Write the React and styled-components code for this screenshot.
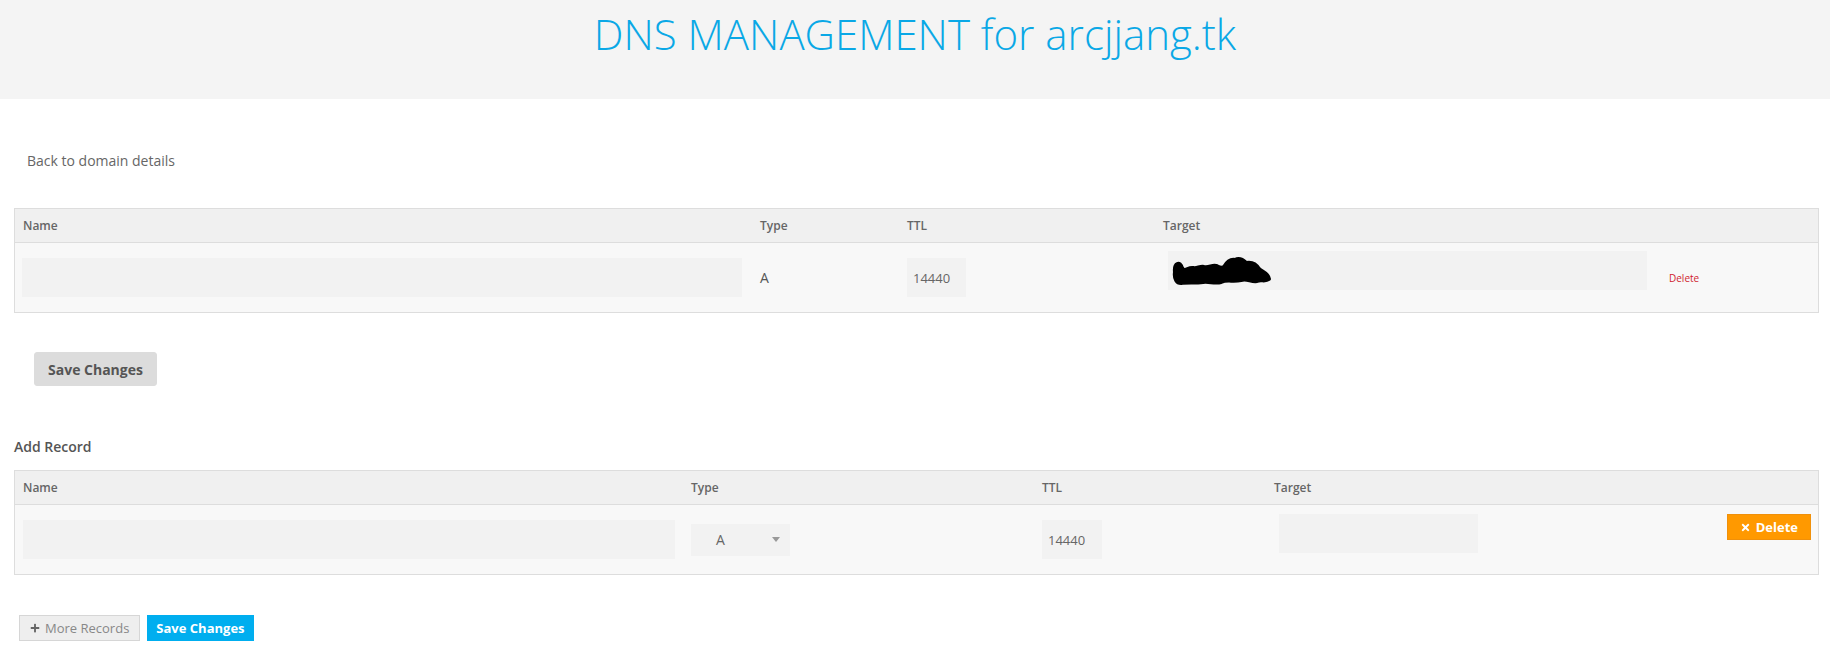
import React from "react";
import styled, { createGlobalStyle } from "styled-components";
import { FaPlus, FaTimes } from "react-icons/fa";

const GlobalStyle = createGlobalStyle`
  body {
    margin: 0;
    background: #ffffff;
    font-family: "Open Sans", "Liberation Sans", sans-serif;
    color: #555;
  }
`;

const Header = styled.header`
  background: #f4f4f4;
  height: 99px;
  padding-top: 5px;
  box-sizing: border-box;
  text-align: center;
`;

const Title = styled.h1`
  margin: 0;
  font-size: 42px;
  line-height: 57px;
  font-weight: 300;
  color: #0aa8e6;
`;

const Content = styled.main`
  padding: 0 11px 10px 14px;
`;

const BackLink = styled.a`
  display: block;
  margin: 52px 0 37px 13px;
  font-size: 14px;
  line-height: 20px;
  color: #666;
  text-decoration: none;
`;

const Table = styled.div`
  border: 1px solid #dddddd;
  background: #f8f8f8;
`;

const Row = styled.div`
  display: grid;
  grid-template-columns: ${(p) => p.$cols};
  align-items: center;
  height: ${(p) => (p.$head ? "33px" : "69px")};
  background: ${(p) => (p.$head ? "#f0f0f0" : "#f8f8f8")};
  border-bottom: ${(p) => (p.$head ? "1px solid #dddddd" : "none")};
`;

const HeadCell = styled.div`
  padding: 0 8px;
  font-size: 12px;
  font-weight: 600;
  color: #666;
`;

const Cell = styled.div`
  padding: 0 8px;
  display: flex;
  align-self: ${(p) => (p.$top ? "start" : "center")};
  margin-top: ${(p) => (p.$top ? "8px" : "0")};
  justify-content: ${(p) => (p.$end ? "flex-end" : "flex-start")};
  padding-right: ${(p) => (p.$end ? "7px" : "8px")};
`;

const Field = styled.div`
  display: flex;
  align-items: center;
  box-sizing: border-box;
  width: ${(p) => p.$w}px;
  height: 39px;
  margin-left: ${(p) => p.$ml || 0}px;
  padding: 0 6px;
  background: #f2f2f2;
  font-size: 13px;
  color: #666;
`;

const TypeText = styled.span`
  font-size: 14px;
  font-weight: 500;
  color: #555;
`;

const Select = styled.div`
  display: flex;
  align-items: center;
  justify-content: space-between;
  box-sizing: border-box;
  width: 99px;
  height: 32px;
  padding: 0 10px 0 25px;
  background: #f2f2f2;
  font-size: 14px;
  color: #666;
`;

const Caret = styled.span`
  width: 0;
  height: 0;
  border-left: 4px solid transparent;
  border-right: 4px solid transparent;
  border-top: 5px solid #999;
`;

const DeleteLink = styled.a`
  font-size: 10px;
  color: #d01c2f;
  text-decoration: none;
`;

const Button = styled.button`
  display: inline-flex;
  align-items: center;
  gap: 5px;
  box-sizing: border-box;
  font-family: "Open Sans", "Liberation Sans", sans-serif;
  cursor: pointer;
  height: ${(p) => p.$h || 26}px;
  padding: 0 ${(p) => p.$px || 10}px;
  font-size: ${(p) => p.$fs || 13}px;
  font-weight: ${(p) => p.$weight || 700};
  color: ${(p) => p.$color};
  background: ${(p) => p.$bg};
  border: 1px solid ${(p) => p.$border || p.$bg};
  border-radius: ${(p) => p.$radius || 0}px;

  svg {
    color: ${(p) => p.$icon || p.$color};
  }
`;

const SaveRow = styled.div`
  margin: 39px 0 0 20px;
`;

const SectionTitle = styled.h3`
  margin: 51px 0 13px;
  font-size: 14px;
  line-height: 20px;
  font-weight: 600;
  color: #555;
`;

const Actions = styled.div`
  display: flex;
  gap: 7px;
  margin: 40px 0 0 5px;
`;

function Scribble() {
  return (
    <svg width="108" height="32" viewBox="0 0 108 32">
      <path
        d="M6 17 C5 8 11 6 13 13 C16 18 19 12 24 13 C28 14 31 11 35 12 C40 13 43 10 47 11 C50 12 52 14 55 12 C58 7 61 4 66 5 C70 3 74 5 77 8 C82 7 87 9 90 14 C93 17 99 18 100 24 C96 27 92 24 88 26 C82 27 78 23 72 25 C64 27 58 24 52 27 C46 29 40 26 34 27 C26 28 18 27 12 28 C8 28 5 24 6 17 Z"
        fill="#000"
        stroke="#000"
        strokeWidth="4"
        strokeLinejoin="round"
      />
    </svg>
  );
}

const COLS1 = "737px 147px 256px 506px 1fr";
const COLS2 = "668px 351px 232px 1fr 120px";

export default function App() {
  return (
    <>
      <GlobalStyle />
      <Header>
        <Title>DNS MANAGEMENT for arcjjang.tk</Title>
      </Header>
      <Content>
        <BackLink href="#">Back to domain details</BackLink>

        <Table>
          <Row $head $cols={COLS1}>
            <HeadCell>Name</HeadCell>
            <HeadCell>Type</HeadCell>
            <HeadCell>TTL</HeadCell>
            <HeadCell>Target</HeadCell>
            <HeadCell />
          </Row>
          <Row $cols={COLS1}>
            <Cell>
              <Field $w={720} $ml={-1} />
            </Cell>
            <Cell>
              <TypeText>A</TypeText>
            </Cell>
            <Cell>
              <Field $w={59}>14440</Field>
            </Cell>
            <Cell $top>
              <Field $w={479} $ml={5} style={{ paddingLeft: 1 }}>
                <Scribble />
              </Field>
            </Cell>
            <Cell>
              <DeleteLink href="#">Delete</DeleteLink>
            </Cell>
          </Row>
        </Table>

        <SaveRow>
          <Button $h={34} $px={13} $fs={14} $radius={3} $bg="#dcdcdc" $color="#555">
            Save Changes
          </Button>
        </SaveRow>

        <SectionTitle>Add Record</SectionTitle>

        <Table>
          <Row $head $cols={COLS2}>
            <HeadCell>Name</HeadCell>
            <HeadCell>Type</HeadCell>
            <HeadCell>TTL</HeadCell>
            <HeadCell>Target</HeadCell>
            <HeadCell />
          </Row>
          <Row $cols={COLS2}>
            <Cell>
              <Field $w={652} />
            </Cell>
            <Cell>
              <Select>
                A<Caret />
              </Select>
            </Cell>
            <Cell>
              <Field $w={60}>14440</Field>
            </Cell>
            <Cell $top style={{ marginTop: 9 }}>
              <Field $w={199} $ml={5} />
            </Cell>
            <Cell $top $end style={{ marginTop: 9 }}>
              <Button $bg="#ff9900" $border="#f0900a" $color="#fff" $px={12}>
                <FaTimes size={11} />
                Delete
              </Button>
            </Cell>
          </Row>
        </Table>

        <Actions>
          <Button $bg="#eeeeee" $border="#d6d6d6" $color="#888" $icon="#666" $weight={400} $px={10}>
            <FaPlus size={10} />
            More Records
          </Button>
          <Button $bg="#00aeef" $color="#fff" $px={8}>
            Save Changes
          </Button>
        </Actions>
      </Content>
    </>
  );
}
